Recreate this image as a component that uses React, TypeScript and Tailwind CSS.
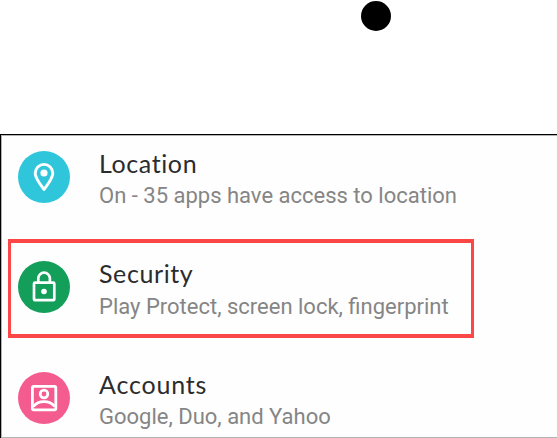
import type { ReactNode } from 'react';

type RowProps = {
  title: string;
  detail: string;
  circle: string;
  titleSpacing: string;
  children: ReactNode;
};

function Row({ title, detail, circle, titleSpacing, children }: RowProps) {
  return (
    <div className="flex h-[110.5px] shrink-0 pl-4">
      <div className={`mt-[14.8px] flex size-[52px] shrink-0 items-center justify-center rounded-full ${circle}`}>
        {children}
      </div>
      <div className="ml-[29px] mt-[9.6px] flex flex-col whitespace-nowrap">
        <span className={`font-['Lato','Open_Sans',sans-serif] text-[25px] leading-[34px] text-[#2b2c2e] ${titleSpacing}`}>
          {title}
        </span>
        <span className="mt-[1.5px] font-['Roboto',sans-serif] text-[22px] leading-[30px] text-[#858585]">
          {detail}
        </span>
      </div>
    </div>
  );
}

export default function App() {
  return (
    <div className="flex h-[438px] w-[557px] flex-col overflow-hidden bg-white">
      <div className="flex h-[134px] shrink-0 pl-[361px] pt-px">
        <div className="size-[30px] rounded-full bg-black" />
      </div>
      <div className="h-[304px] border-l border-t border-black">
        <div className="relative flex h-[303px] flex-col overflow-hidden border-y border-l border-[#b3b3b3] bg-[#fefefe]">
          <Row
            title="Location"
            detail="On - 35 apps have access to location"
            circle="bg-[#2fc6dc]"
            titleSpacing="tracking-[0.6px]"
          >
            <svg width="52" height="52" viewBox="0 0 52 52" fill="none">
              <path d="M26 38.500C22.500 33.500 17.200 27.500 17.200 22.200a8.800 8.800 0 0 1 17.600 0C34.800 27.500 29.500 33.500 26 38.500Z" stroke="white" strokeWidth="2.9" strokeLinejoin="round" />
              <circle cx="26" cy="22" r="3.600" fill="white" />
            </svg>
          </Row>
          <Row
            title="Security"
            detail="Play Protect, screen lock, fingerprint"
            circle="bg-[#139e5a]"
            titleSpacing="tracking-[0.6px]"
          >
            <svg width="52" height="52" viewBox="0 0 52 52" fill="none" stroke="white" strokeWidth="2.7">
              <rect x="16" y="21.700" width="20.300" height="17.500" rx="1" />
              <path d="M20.300 21.500v-4a5.800 5.800 0 0 1 11.600 0v4" />
              <circle cx="26" cy="30.500" r="2.800" fill="white" stroke="none" />
            </svg>
          </Row>
          <Row
            title="Accounts"
            detail="Google, Duo, and Yahoo"
            circle="bg-[#f45c90]"
            titleSpacing="tracking-[0.8px]"
          >
            <svg width="52" height="52" viewBox="0 0 52 52" fill="none" stroke="white" strokeWidth="2.8">
              <rect x="14.400" y="14.400" width="23.400" height="23.400" rx="1.300" />
              <circle cx="26" cy="22" r="3.800" />
              <path d="M15.500 34.500c5-6.500 16-6.500 21.200 0" />
            </svg>
          </Row>
          <div className="pointer-events-none absolute left-[6px] top-[103px] h-[99px] w-[465.500px] border-x-[3px] border-y-4 border-[#fc4747]" />
        </div>
      </div>
    </div>
  );
}
